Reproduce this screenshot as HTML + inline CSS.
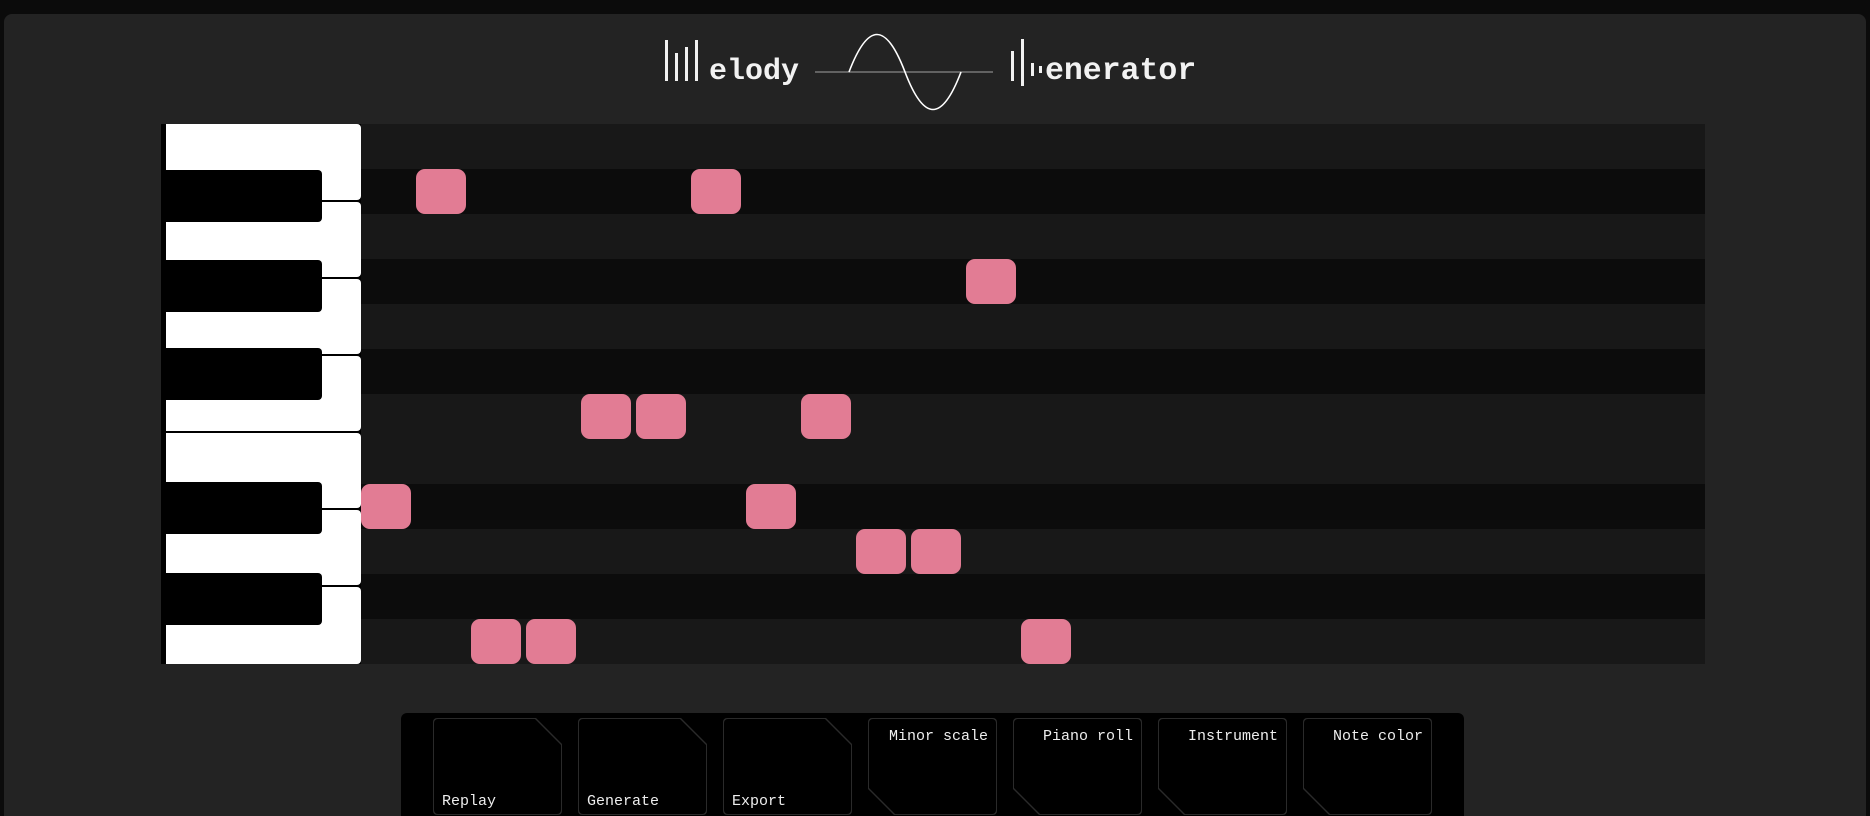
<!DOCTYPE html>
<html><head><meta charset="utf-8"><style>
*{margin:0;padding:0;box-sizing:border-box}
html,body{width:1870px;height:816px;overflow:hidden}
body{background:#0b0b0b;position:relative;font-family:"Liberation Mono",monospace}
.panel{position:absolute;left:4px;top:14px;width:1862px;height:802px;background:#232323;border-radius:8px 8px 0 0}
.roll{position:absolute;left:161px;top:124px;width:1544px;height:540px;background:#111}
.row{position:absolute;left:200px;width:1344px;height:45px}
.wk{position:absolute;left:5px;width:195px;background:#fff;border-radius:0 4px 4px 0}
.bk{position:absolute;left:5px;width:156px;height:52px;background:#000;border-radius:0 4px 4px 0}
.n{position:absolute;width:50px;height:45px;background:#e27c94;border-radius:9px}
.bp{position:absolute;left:401px;top:713px;width:1063px;height:103px;background:#000;border-radius:6px 6px 0 0;overflow:hidden}
.b{position:absolute;top:5px;width:129px;height:97px;background:#2a2a2a;border-radius:4px}
.b i{position:absolute;inset:1px;background:#000;display:block;border-radius:4px}
.tr,.tr i{clip-path:polygon(0 0,calc(100% - 26px) 0,100% 26px,100% 100%,0 100%)}
.bl,.bl i{clip-path:polygon(0 0,100% 0,100% 100%,26px 100%,0 calc(100% - 26px))}
.b span{position:absolute;color:#eee;font-size:15px}
</style></head><body>
<div class="panel"></div>
<svg style="position:absolute;left:0;top:0" width="1870" height="120">
<g fill="#f2f2f2">
<rect x="665" y="40" width="3" height="41"/><rect x="675" y="53" width="3" height="28"/><rect x="685" y="47" width="3" height="34"/><rect x="695" y="40" width="3" height="41"/>
<rect x="1011" y="51" width="3" height="30"/><rect x="1021" y="39" width="3" height="47"/><rect x="1031" y="63" width="3" height="13"/><rect x="1039" y="66" width="3" height="7"/>
</g>
<line x1="815" y1="72" x2="993" y2="72" stroke="#777" stroke-width="1.5"/>
<path d="M849 72 C868 22 886 22 905 72 C924 122 942 122 961 72" fill="none" stroke="#fff" stroke-width="1.6"/>
<text x="709" y="79" fill="#f2f2f2" font-family="Liberation Mono" font-weight="bold" font-size="30">elody</text>
<text x="1045" y="79" fill="#f2f2f2" font-family="Liberation Mono" font-weight="bold" font-size="31.5">enerator</text>
</svg>
<div class="roll">
<div class="row" style="top:0;background:#181818"></div>
<div class="row" style="top:45px;background:#0c0c0c"></div>
<div class="row" style="top:90px;background:#181818"></div>
<div class="row" style="top:135px;background:#0c0c0c"></div>
<div class="row" style="top:180px;background:#181818"></div>
<div class="row" style="top:225px;background:#0c0c0c"></div>
<div class="row" style="top:270px;background:#181818"></div>
<div class="row" style="top:315px;background:#181818"></div>
<div class="row" style="top:360px;background:#0c0c0c"></div>
<div class="row" style="top:405px;background:#181818"></div>
<div class="row" style="top:450px;background:#0c0c0c"></div>
<div class="row" style="top:495px;background:#181818"></div>
<div style="position:absolute;left:0;top:0;width:200px;height:540px;background:#000"></div>
<div class="wk" style="top:0;height:76px"></div>
<div class="wk" style="top:78px;height:75px"></div>
<div class="wk" style="top:155px;height:75px"></div>
<div class="wk" style="top:232px;height:75px"></div>
<div class="wk" style="top:309px;height:75px"></div>
<div class="wk" style="top:386px;height:75px"></div>
<div class="wk" style="top:463px;height:77px"></div>
<div class="bk" style="top:46px"></div>
<div class="bk" style="top:136px"></div>
<div class="bk" style="top:224px"></div>
<div class="bk" style="top:358px"></div>
<div class="bk" style="top:449px"></div>
<div class="n" style="left:255px;top:45px"></div>
<div class="n" style="left:530px;top:45px"></div>
<div class="n" style="left:805px;top:135px"></div>
<div class="n" style="left:420px;top:270px"></div>
<div class="n" style="left:475px;top:270px"></div>
<div class="n" style="left:640px;top:270px"></div>
<div class="n" style="left:200px;top:360px"></div>
<div class="n" style="left:585px;top:360px"></div>
<div class="n" style="left:695px;top:405px"></div>
<div class="n" style="left:750px;top:405px"></div>
<div class="n" style="left:310px;top:495px"></div>
<div class="n" style="left:365px;top:495px"></div>
<div class="n" style="left:860px;top:495px"></div>
</div>
<div class="bp">
<div class="b tr" style="left:32px"><i></i><span style="left:9px;top:75px">Replay</span></div>
<div class="b tr" style="left:177px"><i></i><span style="left:9px;top:75px">Generate</span></div>
<div class="b tr" style="left:322px"><i></i><span style="left:9px;top:75px">Export</span></div>
<div class="b bl" style="left:467px"><i></i><span style="right:9px;top:10px">Minor scale</span></div>
<div class="b bl" style="left:612px"><i></i><span style="right:9px;top:10px">Piano roll</span></div>
<div class="b bl" style="left:757px"><i></i><span style="right:9px;top:10px">Instrument</span></div>
<div class="b bl" style="left:902px"><i></i><span style="right:9px;top:10px">Note color</span></div>
</div>
</body></html>
